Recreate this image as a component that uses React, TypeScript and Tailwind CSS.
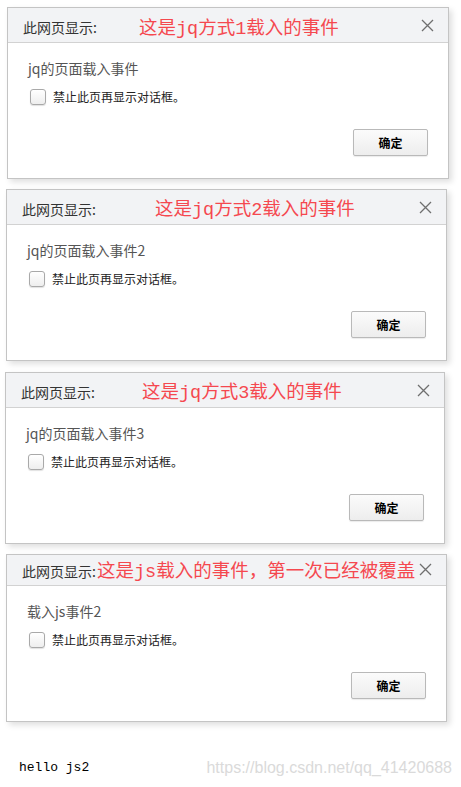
import { ReactNode } from 'react';

type DialogProps = {
  className: string;
  note: string;
  noteClass: string;
  message: string;
  cropped?: boolean;
};

const cjk = { fontFamily: '"Noto Sans CJK SC", "Noto Sans", sans-serif' };
const noteFont = { fontFamily: '"Liberation Mono", "Noto Sans CJK SC", monospace' };

function CloseIcon() {
  return (
    <svg width="13" height="13" viewBox="0 0 13 13" fill="none">
      <path d="M1 1L12 12M12 1L1 12" stroke="#6f6f6f" strokeWidth="1.3" />
    </svg>
  );
}

function Checkbox() {
  return (
    <span className="block w-[16px] h-[16px] rounded-[3px] border border-[#a9a9a9] bg-gradient-to-b from-white to-[#eeeeee] shadow-[0_1px_1px_rgba(0,0,0,0.12)]" />
  );
}

function Dialog({ className, note, noteClass, message, cropped }: DialogProps): ReactNode {
  return (
    <div
      className={`relative bg-white border border-[#c4c4c4] shadow-[3px_3px_6px_rgba(0,0,0,0.13)] ${className}`}
      style={cjk}
    >
      {/* Header */}
      <div
        className={`bg-[#f2f3f5] border-b border-[#d2d2d2] overflow-hidden ${cropped ? 'h-[31px]' : 'h-[35px]'}`}
      >
        <div className={`h-[34px] flex items-center justify-between pl-[15px] pr-[14px] ${cropped ? '-mt-[3px]' : ''}`}>
          <span className="text-[14px] leading-[20px] text-[#333] pt-[3px]">此网页显示:</span>
          <CloseIcon />
        </div>
      </div>

      {/* Annotation drawn over the header */}
      <span
        className={`absolute whitespace-nowrap text-[18.5px] leading-[24px] text-[#f5484f] ${noteClass}`}
        style={noteFont}
      >
        {note}
      </span>

      {/* Body */}
      <div className="h-[135px] flex flex-col pt-[15px] pr-[20px]">
        <div className="pl-[20px] text-[14px] leading-[20px] text-[#555]">{message}</div>
        <div className="flex items-center mt-[11px] pl-[22px] gap-[7px]">
          <Checkbox />
          <span className="text-[12px] leading-[16px] text-[#222]">禁止此页再显示对话框。</span>
        </div>
        <div className="flex justify-end mt-[24px]">
          <button className="w-[75px] h-[27px] rounded-[2px] border border-[#b9b9b9] bg-gradient-to-b from-[#fbfbfb] to-[#ededed] shadow-[0_1px_1px_rgba(0,0,0,0.08)] text-[12px] font-bold text-black">
            确定
          </button>
        </div>
      </div>
    </div>
  );
}

export default function App() {
  return (
    <div className="w-[461px] h-[787px] bg-white overflow-hidden pt-[7px]">
      <Dialog
        className="ml-[7px] w-[442px]"
        note="这是jq方式1载入的事件"
        noteClass="left-[131px] top-[10px]"
        message="jq的页面载入事件"
      />
      <Dialog
        className="ml-[6px] w-[441px] mt-[10px]"
        note="这是jq方式2载入的事件"
        noteClass="left-[148px] top-[9px]"
        message="jq的页面载入事件2"
      />
      <Dialog
        className="ml-[5px] w-[440px] mt-[11px]"
        note="这是jq方式3载入的事件"
        noteClass="left-[136px] top-[9px]"
        message="jq的页面载入事件3"
      />
      <Dialog
        className="ml-[6px] w-[441px] mt-[10px]"
        note="这是js载入的事件，第一次已经被覆盖"
        noteClass="left-[90px] top-[6px]"
        message="载入js事件2"
        cropped
      />

      <div className="flex items-center justify-between mt-[38px] pl-[19px] pr-[9px]">
        <span
          className="text-[13px] leading-[16px] text-black"
          style={{ fontFamily: '"Liberation Mono", monospace' }}
        >
          hello js2
        </span>
        <span
          className="text-[16px] leading-[16px] text-[#dadada]"
          style={{ fontFamily: '"Liberation Sans", Arial, sans-serif' }}
        >
          https://blog.csdn.net/qq_41420688
        </span>
      </div>
    </div>
  );
}
